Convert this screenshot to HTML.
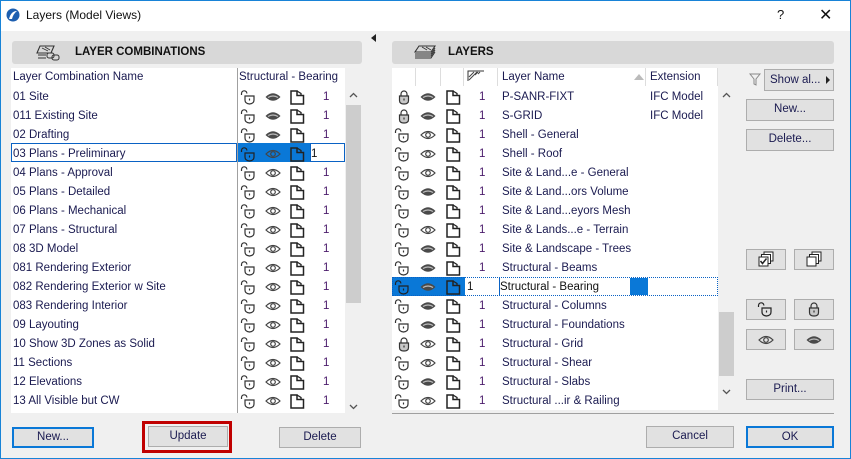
<!DOCTYPE html>
<html><head><meta charset="utf-8">
<style>
*{box-sizing:border-box;margin:0;padding:0}
body{width:851px;height:459px;overflow:hidden;background:#f0f0f0;font-family:"Liberation Sans",sans-serif;font-size:11.5px;color:#1a1a50;position:relative}
.a{position:absolute}
.win{left:0;top:0;width:851px;height:459px;border:1px solid #1883d7}
.title{left:1px;top:1px;width:849px;height:30px;background:#fff}
.hdr{background:#d8d8d8;border-radius:3px;height:23px;font-weight:bold;font-size:11.5px;color:#111;line-height:23px}
.list{background:#fff}
.row{position:absolute;height:19px;line-height:19px;white-space:nowrap}
.btn{position:absolute;background:#e1e1e1;border:1px solid #adadad;text-align:center;line-height:19px;color:#1a1a50;font-size:11.5px}
.ic{position:absolute;width:16px;height:16px}
.n{position:absolute;color:#4a1a6a}
</style></head><body>
<svg width="0" height="0" style="position:absolute">
<defs>
<symbol id="ul" viewBox="0 0 16 16"><path d="M1.5 6V4.5a2.7 2.7 0 0 1 5.4 0" fill="none" stroke="#333" stroke-width="1.2"/><path d="M5 7h9v4q0 3.5-4.5 4q-4.5-.5-4.5-4z" fill="#fff" stroke="#333" stroke-width="1.2"/><path d="M9.5 9.5v2" stroke="#333" stroke-width="1.2"/></symbol>
<symbol id="ulw" viewBox="0 0 16 16"><path d="M1.5 6V4.5a2.7 2.7 0 0 1 5.4 0" fill="none" stroke="#222" stroke-width="1.2"/><path d="M5 7h9v4q0 3.5-4.5 4q-4.5-.5-4.5-4z" fill="none" stroke="#222" stroke-width="1.2"/><path d="M9.5 9.5v2" stroke="#222" stroke-width="1.2"/></symbol>
<symbol id="lk" viewBox="0 0 16 16"><path d="M5 7V5a3 3 0 0 1 6 0v2" fill="none" stroke="#333" stroke-width="1.2"/><path d="M3.5 7h9v4.5q0 3.5-4.5 3.5q-4.5 0-4.5-3.5z" fill="#c8c8c8" stroke="#333" stroke-width="1.2"/><path d="M8 9.5v2" stroke="#333" stroke-width="1.2"/></symbol>
<symbol id="eo" viewBox="0 0 16 16"><path d="M1 8Q8 1 15 8Q8 15 1 8Z" fill="none" stroke="#444" stroke-width="1.2"/><circle cx="8" cy="8" r="2.3" fill="none" stroke="#444" stroke-width="1.2"/></symbol>
<symbol id="ef" viewBox="0 0 16 16"><path d="M0.5 8Q8 0.5 15.5 8Q8 15.5 0.5 8Z" fill="#4a4a4a"/><path d="M3 8.5Q8 5.5 13 8.5" fill="none" stroke="#bbb" stroke-width="1.2"/></symbol>
<symbol id="dc" viewBox="0 0 16 16"><path d="M2 2h6v4.5h6.5V15H2z" fill="none" stroke="#222" stroke-width="1.5"/><path d="M8 2l4 2.5v2" fill="none" stroke="#222" stroke-width="1.3"/></symbol>
</defs></svg>
<div class="a win"></div>
<div class="a title"></div>
<svg class="a" style="left:6px;top:8px" width="14" height="14" viewBox="0 0 14 14"><circle cx="7" cy="7" r="6.5" fill="#1d5fb0"/><path d="M3 11Q5 3 11 3Q7 6 6 11z" fill="#fff"/></svg>
<div class="a" style="left:26px;top:8px;font-size:12px;color:#111">Layers (Model Views)</div>
<div class="a" style="left:777px;top:7px;font-size:13px;color:#111">?</div>
<div class="a" style="left:819px;top:5px;font-size:16px;color:#111">✕</div>

<div class="a" style="left:371px;top:34px;width:0;height:0;border-top:4px solid transparent;border-bottom:4px solid transparent;border-right:5px solid #222"></div>

<!-- LEFT -->
<div class="a hdr" style="left:12px;top:41px;width:350px;padding-left:63px">LAYER COMBINATIONS</div>
<svg class="a" style="left:36px;top:45px" width="26" height="16" viewBox="0 0 26 16"><path d="M4 1h14l-3 7H1z M2 10h8 M2 13h8" fill="none" stroke="#333" stroke-width="1.1"/><rect x="11" y="8" width="7" height="5" rx="2" fill="none" stroke="#333"/><rect x="16" y="10" width="7" height="5" rx="2" fill="none" stroke="#333"/><path d="M6 3l6 3M9 2l5 3" stroke="#333" stroke-width=".8"/></svg>
<div class="a list" style="left:11px;top:68px;width:334px;height:345px;overflow:hidden">
 <div class="a" style="left:2px;top:3px;color:#1a1a50">Layer Combination Name</div>
 <div class="a" style="left:226px;top:0;width:1px;height:345px;background:#a0a0a0"></div>
 <div class="a" style="left:228px;top:3px">Structural - Bearing</div>
 <div class="a" style="left:0;top:75px;width:226px;height:19px;border:1px solid #0a62c4"></div>
 <div class="a" style="left:227px;top:75px;width:72px;height:19px;background:#0a78d7"></div>
 <div class="a" style="left:299px;top:75px;width:35px;height:19px;border:1px solid #0a62c4"></div>
</div>
<div class="a" style="left:11px;top:88px;width:334px;height:325px;overflow:hidden">
<div class="row" style="top:0;left:2px">01 Site</div>
<div class="row" style="top:19px;left:2px">011 Existing Site</div>
<div class="row" style="top:38px;left:2px">02 Drafting</div>
<div class="row" style="top:57px;left:2px">03 Plans - Preliminary</div>
<div class="row" style="top:76px;left:2px">04 Plans - Approval</div>
<div class="row" style="top:95px;left:2px">05 Plans - Detailed</div>
<div class="row" style="top:114px;left:2px">06 Plans - Mechanical</div>
<div class="row" style="top:133px;left:2px">07 Plans - Structural</div>
<div class="row" style="top:152px;left:2px">08 3D Model</div>
<div class="row" style="top:171px;left:2px">081 Rendering Exterior</div>
<div class="row" style="top:190px;left:2px">082 Rendering Exterior w Site</div>
<div class="row" style="top:209px;left:2px">083 Rendering Interior</div>
<div class="row" style="top:228px;left:2px">09 Layouting</div>
<div class="row" style="top:247px;left:2px">10 Show 3D Zones as Solid</div>
<div class="row" style="top:266px;left:2px">11 Sections</div>
<div class="row" style="top:285px;left:2px">12 Elevations</div>
<div class="row" style="top:304px;left:2px">13 All Visible but CW</div>
<div class="row" style="top:323px;left:2px">14</div>
<svg class="ic" style="left:229px;top:1px"><use href="#ul" width="16" height="16"/></svg><svg class="ic" style="left:254px;top:1px"><use href="#ef" width="16" height="16"/></svg><svg class="ic" style="left:278px;top:1px"><use href="#dc" width="16" height="16"/></svg><div class="n" style="left:312px;top:3px">1</div>
<svg class="ic" style="left:229px;top:20px"><use href="#ul" width="16" height="16"/></svg><svg class="ic" style="left:254px;top:20px"><use href="#ef" width="16" height="16"/></svg><svg class="ic" style="left:278px;top:20px"><use href="#dc" width="16" height="16"/></svg><div class="n" style="left:312px;top:22px">1</div>
<svg class="ic" style="left:229px;top:39px"><use href="#ul" width="16" height="16"/></svg><svg class="ic" style="left:254px;top:39px"><use href="#ef" width="16" height="16"/></svg><svg class="ic" style="left:278px;top:39px"><use href="#dc" width="16" height="16"/></svg><div class="n" style="left:312px;top:41px">1</div>
<svg class="ic" style="left:229px;top:58px"><use href="#ulw" width="16" height="16"/></svg><svg class="ic" style="left:254px;top:58px"><use href="#eo" width="16" height="16"/></svg><svg class="ic" style="left:278px;top:58px"><use href="#dc" width="16" height="16"/></svg><div class="n" style="left:300px;top:60px;color:#111">1</div>
<svg class="ic" style="left:229px;top:77px"><use href="#ul" width="16" height="16"/></svg><svg class="ic" style="left:254px;top:77px"><use href="#eo" width="16" height="16"/></svg><svg class="ic" style="left:278px;top:77px"><use href="#dc" width="16" height="16"/></svg><div class="n" style="left:312px;top:79px">1</div>
<svg class="ic" style="left:229px;top:96px"><use href="#ul" width="16" height="16"/></svg><svg class="ic" style="left:254px;top:96px"><use href="#eo" width="16" height="16"/></svg><svg class="ic" style="left:278px;top:96px"><use href="#dc" width="16" height="16"/></svg><div class="n" style="left:312px;top:98px">1</div>
<svg class="ic" style="left:229px;top:115px"><use href="#ul" width="16" height="16"/></svg><svg class="ic" style="left:254px;top:115px"><use href="#eo" width="16" height="16"/></svg><svg class="ic" style="left:278px;top:115px"><use href="#dc" width="16" height="16"/></svg><div class="n" style="left:312px;top:117px">1</div>
<svg class="ic" style="left:229px;top:134px"><use href="#ul" width="16" height="16"/></svg><svg class="ic" style="left:254px;top:134px"><use href="#eo" width="16" height="16"/></svg><svg class="ic" style="left:278px;top:134px"><use href="#dc" width="16" height="16"/></svg><div class="n" style="left:312px;top:136px">1</div>
<svg class="ic" style="left:229px;top:153px"><use href="#ul" width="16" height="16"/></svg><svg class="ic" style="left:254px;top:153px"><use href="#eo" width="16" height="16"/></svg><svg class="ic" style="left:278px;top:153px"><use href="#dc" width="16" height="16"/></svg><div class="n" style="left:312px;top:155px">1</div>
<svg class="ic" style="left:229px;top:172px"><use href="#ul" width="16" height="16"/></svg><svg class="ic" style="left:254px;top:172px"><use href="#eo" width="16" height="16"/></svg><svg class="ic" style="left:278px;top:172px"><use href="#dc" width="16" height="16"/></svg><div class="n" style="left:312px;top:174px">1</div>
<svg class="ic" style="left:229px;top:191px"><use href="#ul" width="16" height="16"/></svg><svg class="ic" style="left:254px;top:191px"><use href="#eo" width="16" height="16"/></svg><svg class="ic" style="left:278px;top:191px"><use href="#dc" width="16" height="16"/></svg><div class="n" style="left:312px;top:193px">1</div>
<svg class="ic" style="left:229px;top:210px"><use href="#ul" width="16" height="16"/></svg><svg class="ic" style="left:254px;top:210px"><use href="#eo" width="16" height="16"/></svg><svg class="ic" style="left:278px;top:210px"><use href="#dc" width="16" height="16"/></svg><div class="n" style="left:312px;top:212px">1</div>
<svg class="ic" style="left:229px;top:229px"><use href="#ul" width="16" height="16"/></svg><svg class="ic" style="left:254px;top:229px"><use href="#eo" width="16" height="16"/></svg><svg class="ic" style="left:278px;top:229px"><use href="#dc" width="16" height="16"/></svg><div class="n" style="left:312px;top:231px">1</div>
<svg class="ic" style="left:229px;top:248px"><use href="#ul" width="16" height="16"/></svg><svg class="ic" style="left:254px;top:248px"><use href="#eo" width="16" height="16"/></svg><svg class="ic" style="left:278px;top:248px"><use href="#dc" width="16" height="16"/></svg><div class="n" style="left:312px;top:250px">1</div>
<svg class="ic" style="left:229px;top:267px"><use href="#ul" width="16" height="16"/></svg><svg class="ic" style="left:254px;top:267px"><use href="#eo" width="16" height="16"/></svg><svg class="ic" style="left:278px;top:267px"><use href="#dc" width="16" height="16"/></svg><div class="n" style="left:312px;top:269px">1</div>
<svg class="ic" style="left:229px;top:286px"><use href="#ul" width="16" height="16"/></svg><svg class="ic" style="left:254px;top:286px"><use href="#eo" width="16" height="16"/></svg><svg class="ic" style="left:278px;top:286px"><use href="#dc" width="16" height="16"/></svg><div class="n" style="left:312px;top:288px">1</div>
<svg class="ic" style="left:229px;top:305px"><use href="#ul" width="16" height="16"/></svg><svg class="ic" style="left:254px;top:305px"><use href="#eo" width="16" height="16"/></svg><svg class="ic" style="left:278px;top:305px"><use href="#dc" width="16" height="16"/></svg><div class="n" style="left:312px;top:307px">1</div>
<svg class="ic" style="left:229px;top:324px"><use href="#ul" width="16" height="16"/></svg><svg class="ic" style="left:254px;top:324px"><use href="#eo" width="16" height="16"/></svg><svg class="ic" style="left:278px;top:324px"><use href="#dc" width="16" height="16"/></svg>
</div>
<div class="a" style="left:346px;top:105px;width:15px;height:198px;background:#cdcdcd"></div>
<svg class="a" style="left:349px;top:92px" width="9" height="6" viewBox="0 0 9 6"><path d="M1 5l3.5-3.5L8 5" fill="none" stroke="#555" stroke-width="1.3"/></svg>
<svg class="a" style="left:349px;top:404px" width="9" height="6" viewBox="0 0 9 6"><path d="M1 1l3.5 3.5L8 1" fill="none" stroke="#555" stroke-width="1.3"/></svg>

<div class="btn" style="left:12px;top:427px;width:82px;height:21px;border:2px solid #0a78d7;line-height:17px">New...</div>
<div class="a" style="left:142px;top:421px;width:90px;height:32px;border:3px solid #c00000"></div>
<div class="btn" style="left:148px;top:426px;width:80px;height:21px">Update</div>
<div class="btn" style="left:279px;top:427px;width:82px;height:21px">Delete</div>

<!-- RIGHT -->
<div class="a hdr" style="left:392px;top:41px;width:442px;padding-left:56px">LAYERS</div>
<svg class="a" style="left:413px;top:45px" width="26" height="16" viewBox="0 0 26 16"><path d="M6 1h16l-4 6H2z" fill="none" stroke="#333" stroke-width="1.1"/><path d="M2 9h16l4-6 M2 11h16l4-6 M2 13h16l4-6" fill="none" stroke="#333" stroke-width="1"/><path d="M9 2l5 3M13 2l5 3" stroke="#333" stroke-width=".8"/></svg>
<div class="a list" style="left:392px;top:68px;width:326px;height:342px"></div>
<div class="a" style="left:415px;top:68px;width:1px;height:18px;background:#ddd"></div>
<div class="a" style="left:440px;top:68px;width:1px;height:18px;background:#ddd"></div>
<div class="a" style="left:463px;top:68px;width:1px;height:18px;background:#ddd"></div>
<div class="a" style="left:497px;top:68px;width:1px;height:18px;background:#ddd"></div>
<div class="a" style="left:645px;top:68px;width:1px;height:18px;background:#ddd"></div>
<div class="a" style="left:717px;top:68px;width:1px;height:18px;background:#ddd"></div>
<svg class="a" style="left:467px;top:70px" width="18" height="12" viewBox="0 0 18 12"><path d="M1 11V1h16" fill="none" stroke="#333"/><path d="M2 7l5-5M5 7l5-5M8 5l3-3M11 4l2-2M2 10l3-3" stroke="#444"/></svg>
<div class="a" style="left:502px;top:71px">Layer Name</div>
<div class="a" style="left:634px;top:74px;width:0;height:0;border-left:5px solid transparent;border-right:5px solid transparent;border-bottom:6px solid #bbb"></div>
<div class="a" style="left:650px;top:71px">Extension</div>
<div class="a" style="left:392px;top:277px;width:73px;height:19px;background:#0a78d7"></div>
<div class="a" style="left:392px;top:277px;width:326px;height:19px;border:1px dotted #0a62c4"></div>
<div class="a" style="left:499px;top:277px;width:1px;height:19px;background:#0a62c4"></div>
<div class="a" style="left:630px;top:278px;width:18px;height:17px;background:#0a78d7"></div>
<div class="a" style="left:392px;top:87px;width:326px;height:323px;overflow:hidden">
<div class="row" style="top:1px;left:110px">P-SANR-FIXT</div><div class="row" style="top:1px;left:258px">IFC Model</div>
<div class="row" style="top:20px;left:110px">S-GRID</div><div class="row" style="top:20px;left:258px">IFC Model</div>
<div class="row" style="top:39px;left:110px">Shell - General</div>
<div class="row" style="top:58px;left:110px">Shell - Roof</div>
<div class="row" style="top:77px;left:110px">Site &amp; Land...e - General</div>
<div class="row" style="top:96px;left:110px">Site &amp; Land...ors Volume</div>
<div class="row" style="top:115px;left:110px">Site &amp; Land...eyors Mesh</div>
<div class="row" style="top:134px;left:110px">Site &amp; Lands...e - Terrain</div>
<div class="row" style="top:153px;left:110px">Site &amp; Landscape - Trees</div>
<div class="row" style="top:172px;left:110px">Structural - Beams</div>
<div class="row" style="top:191px;left:108px;color:#111">Structural - Bearing</div>
<div class="row" style="top:210px;left:110px">Structural - Columns</div>
<div class="row" style="top:229px;left:110px">Structural - Foundations</div>
<div class="row" style="top:248px;left:110px">Structural - Grid</div>
<div class="row" style="top:267px;left:110px">Structural - Shear</div>
<div class="row" style="top:286px;left:110px">Structural - Slabs</div>
<div class="row" style="top:305px;left:110px">Structural ...ir &amp; Railing</div>

<svg class="ic" style="left:4px;top:2px"><use href="#lk" width="16" height="16"/></svg><svg class="ic" style="left:28px;top:2px"><use href="#ef" width="16" height="16"/></svg><svg class="ic" style="left:53px;top:2px"><use href="#dc" width="16" height="16"/></svg><div class="n" style="left:87px;top:4px">1</div>
<svg class="ic" style="left:4px;top:21px"><use href="#lk" width="16" height="16"/></svg><svg class="ic" style="left:28px;top:21px"><use href="#ef" width="16" height="16"/></svg><svg class="ic" style="left:53px;top:21px"><use href="#dc" width="16" height="16"/></svg><div class="n" style="left:87px;top:23px">1</div>
<svg class="ic" style="left:2px;top:40px"><use href="#ul" width="16" height="16"/></svg><svg class="ic" style="left:28px;top:40px"><use href="#eo" width="16" height="16"/></svg><svg class="ic" style="left:53px;top:40px"><use href="#dc" width="16" height="16"/></svg><div class="n" style="left:87px;top:42px">1</div>
<svg class="ic" style="left:2px;top:59px"><use href="#ul" width="16" height="16"/></svg><svg class="ic" style="left:28px;top:59px"><use href="#eo" width="16" height="16"/></svg><svg class="ic" style="left:53px;top:59px"><use href="#dc" width="16" height="16"/></svg><div class="n" style="left:87px;top:61px">1</div>
<svg class="ic" style="left:2px;top:78px"><use href="#ul" width="16" height="16"/></svg><svg class="ic" style="left:28px;top:78px"><use href="#eo" width="16" height="16"/></svg><svg class="ic" style="left:53px;top:78px"><use href="#dc" width="16" height="16"/></svg><div class="n" style="left:87px;top:80px">1</div>
<svg class="ic" style="left:2px;top:97px"><use href="#ul" width="16" height="16"/></svg><svg class="ic" style="left:28px;top:97px"><use href="#ef" width="16" height="16"/></svg><svg class="ic" style="left:53px;top:97px"><use href="#dc" width="16" height="16"/></svg><div class="n" style="left:87px;top:99px">1</div>
<svg class="ic" style="left:2px;top:116px"><use href="#ul" width="16" height="16"/></svg><svg class="ic" style="left:28px;top:116px"><use href="#ef" width="16" height="16"/></svg><svg class="ic" style="left:53px;top:116px"><use href="#dc" width="16" height="16"/></svg><div class="n" style="left:87px;top:118px">1</div>
<svg class="ic" style="left:2px;top:135px"><use href="#ul" width="16" height="16"/></svg><svg class="ic" style="left:28px;top:135px"><use href="#eo" width="16" height="16"/></svg><svg class="ic" style="left:53px;top:135px"><use href="#dc" width="16" height="16"/></svg><div class="n" style="left:87px;top:137px">1</div>
<svg class="ic" style="left:2px;top:154px"><use href="#ul" width="16" height="16"/></svg><svg class="ic" style="left:28px;top:154px"><use href="#ef" width="16" height="16"/></svg><svg class="ic" style="left:53px;top:154px"><use href="#dc" width="16" height="16"/></svg><div class="n" style="left:87px;top:156px">1</div>
<svg class="ic" style="left:2px;top:173px"><use href="#ul" width="16" height="16"/></svg><svg class="ic" style="left:28px;top:173px"><use href="#ef" width="16" height="16"/></svg><svg class="ic" style="left:53px;top:173px"><use href="#dc" width="16" height="16"/></svg><div class="n" style="left:87px;top:175px">1</div>
<svg class="ic" style="left:2px;top:192px"><use href="#ulw" width="16" height="16"/></svg><svg class="ic" style="left:28px;top:192px"><use href="#ef" width="16" height="16"/></svg><svg class="ic" style="left:53px;top:192px"><use href="#dc" width="16" height="16"/></svg><div class="n" style="left:75px;top:194px;color:#111">1</div>
<svg class="ic" style="left:2px;top:211px"><use href="#ul" width="16" height="16"/></svg><svg class="ic" style="left:28px;top:211px"><use href="#ef" width="16" height="16"/></svg><svg class="ic" style="left:53px;top:211px"><use href="#dc" width="16" height="16"/></svg><div class="n" style="left:87px;top:213px">1</div>
<svg class="ic" style="left:2px;top:230px"><use href="#ul" width="16" height="16"/></svg><svg class="ic" style="left:28px;top:230px"><use href="#ef" width="16" height="16"/></svg><svg class="ic" style="left:53px;top:230px"><use href="#dc" width="16" height="16"/></svg><div class="n" style="left:87px;top:232px">1</div>
<svg class="ic" style="left:4px;top:249px"><use href="#lk" width="16" height="16"/></svg><svg class="ic" style="left:28px;top:249px"><use href="#eo" width="16" height="16"/></svg><svg class="ic" style="left:53px;top:249px"><use href="#dc" width="16" height="16"/></svg><div class="n" style="left:87px;top:251px">1</div>
<svg class="ic" style="left:2px;top:268px"><use href="#ul" width="16" height="16"/></svg><svg class="ic" style="left:28px;top:268px"><use href="#eo" width="16" height="16"/></svg><svg class="ic" style="left:53px;top:268px"><use href="#dc" width="16" height="16"/></svg><div class="n" style="left:87px;top:270px">1</div>
<svg class="ic" style="left:2px;top:287px"><use href="#ul" width="16" height="16"/></svg><svg class="ic" style="left:28px;top:287px"><use href="#ef" width="16" height="16"/></svg><svg class="ic" style="left:53px;top:287px"><use href="#dc" width="16" height="16"/></svg><div class="n" style="left:87px;top:289px">1</div>
<svg class="ic" style="left:2px;top:306px"><use href="#ul" width="16" height="16"/></svg><svg class="ic" style="left:28px;top:306px"><use href="#eo" width="16" height="16"/></svg><svg class="ic" style="left:53px;top:306px"><use href="#dc" width="16" height="16"/></svg><div class="n" style="left:87px;top:308px">1</div>
</div>
<div class="a" style="left:719px;top:312px;width:15px;height:64px;background:#cdcdcd"></div>
<svg class="a" style="left:722px;top:92px" width="9" height="6" viewBox="0 0 9 6"><path d="M1 5l3.5-3.5L8 5" fill="none" stroke="#555" stroke-width="1.3"/></svg>
<svg class="a" style="left:722px;top:389px" width="9" height="6" viewBox="0 0 9 6"><path d="M1 1l3.5 3.5L8 1" fill="none" stroke="#555" stroke-width="1.3"/></svg>

<svg class="a" style="left:749px;top:73px" width="12" height="13" viewBox="0 0 12 13"><path d="M1 1h10L7 6v6L5 11V6z" fill="none" stroke="#888"/></svg>
<div class="btn" style="left:764px;top:69px;width:70px;height:22px;text-align:left;padding-left:5px;line-height:20px">Show al...</div>
<div class="a" style="left:826px;top:76px;width:0;height:0;border-top:4px solid transparent;border-bottom:4px solid transparent;border-left:4px solid #222"></div>
<div class="btn" style="left:746px;top:99px;width:88px;height:22px">New...</div>
<div class="btn" style="left:746px;top:129px;width:88px;height:22px">Delete...</div>
<div class="btn" style="left:746px;top:249px;width:40px;height:21px"></div>
<svg class="a" style="left:757px;top:251px" width="18" height="17" viewBox="0 0 18 17"><rect x="7" y="1" width="9" height="9" fill="#fff" stroke="#222"/><rect x="4.5" y="3.5" width="9" height="9" fill="#fff" stroke="#222"/><rect x="2" y="6" width="9" height="9" fill="#fff" stroke="#222"/><path d="M3.5 10l2 2.5 4-5" fill="none" stroke="#222" stroke-width="1.5"/></svg>
<div class="btn" style="left:794px;top:249px;width:40px;height:21px"></div>
<svg class="a" style="left:805px;top:251px" width="18" height="17" viewBox="0 0 18 17"><rect x="7" y="1" width="9" height="9" fill="#fff" stroke="#222"/><rect x="4.5" y="3.5" width="9" height="9" fill="#fff" stroke="#222"/><rect x="2" y="6" width="9" height="9" fill="#fff" stroke="#222"/></svg>
<div class="btn" style="left:746px;top:299px;width:40px;height:21px"></div>
<svg class="ic" style="left:757px;top:301px"><use href="#ulw" width="16" height="16"/></svg>
<div class="btn" style="left:794px;top:299px;width:40px;height:21px"></div>
<svg class="ic" style="left:806px;top:301px"><use href="#lk" width="16" height="16"/></svg>
<div class="btn" style="left:746px;top:329px;width:40px;height:21px"></div>
<svg class="ic" style="left:758px;top:332px"><use href="#eo" width="16" height="16"/></svg>
<div class="btn" style="left:794px;top:329px;width:40px;height:21px"></div>
<svg class="ic" style="left:806px;top:332px"><use href="#ef" width="16" height="16"/></svg>
<div class="btn" style="left:746px;top:379px;width:88px;height:21px">Print...</div>
<div class="a" style="left:392px;top:413px;width:442px;height:1px;background:#a0a0a0"></div>
<div class="btn" style="left:646px;top:426px;width:88px;height:22px">Cancel</div>
<div class="btn" style="left:746px;top:426px;width:88px;height:22px;border:2px solid #0a78d7;line-height:18px">OK</div>
</body></html>
